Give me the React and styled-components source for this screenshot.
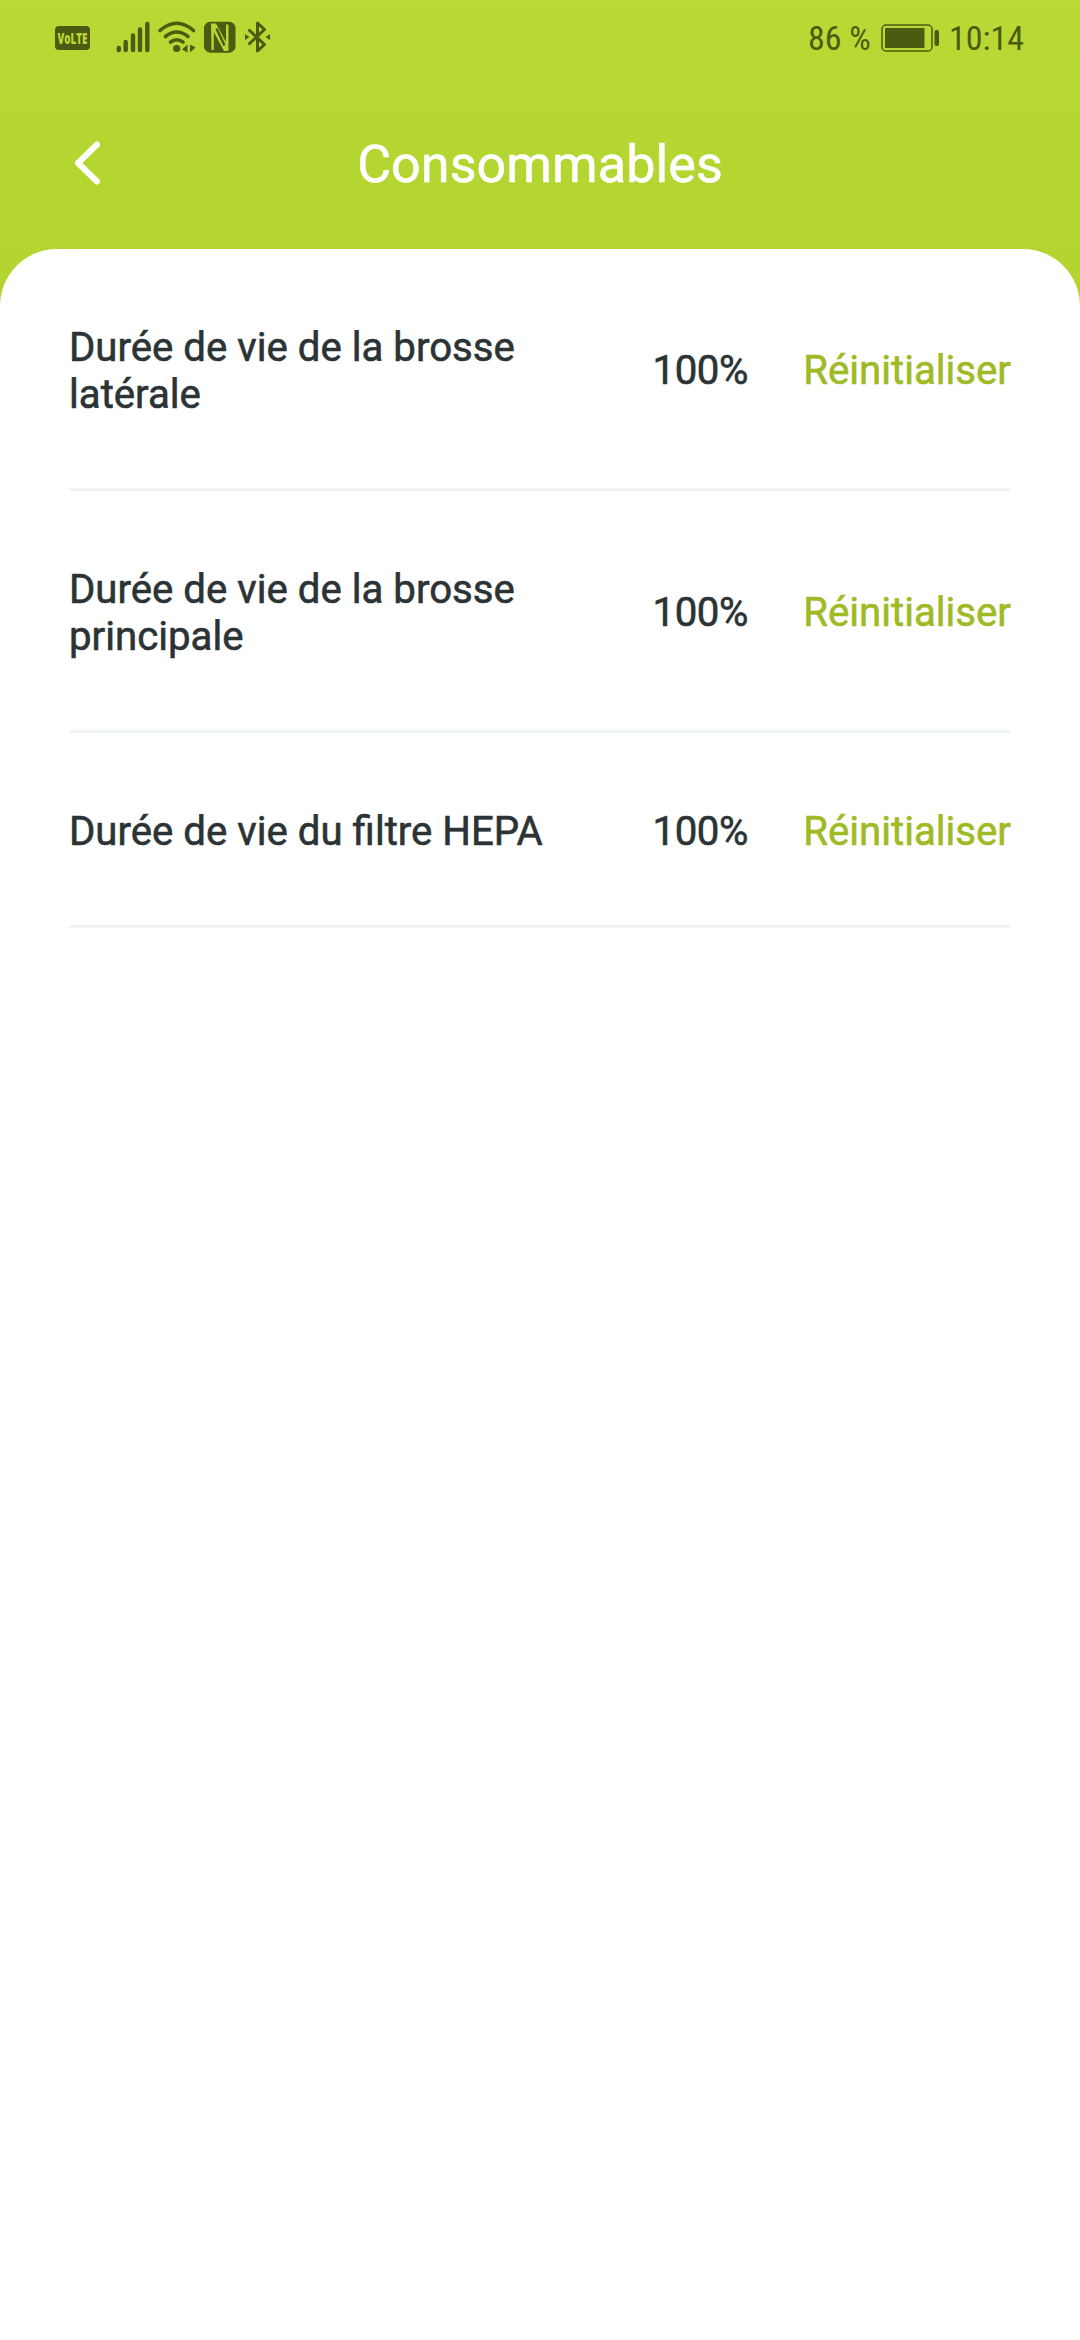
import React from "react";
import styled, { createGlobalStyle } from "styled-components";

const GlobalStyle = createGlobalStyle`
  body {
    margin: 0;
    background-color: #fff;
    font-family: Roboto, sans-serif;
  }
`;

const Screen = styled.div`
  display: flex;
  flex-direction: column;
  width: 1080px;
  height: 2340px;
  background: linear-gradient(#bad934 0px, #b5d531 160px, #b4d42f 320px);
`;

const StatusBar = styled.div`
  display: flex;
  align-items: center;
  justify-content: space-between;
  box-sizing: border-box;
  height: 76px;
  padding: 0 55px;
  color: #4b5b12;
`;

const StatusIcons = styled.svg`
  display: block;
  width: 220px;
  height: 76px;
`;

const StatusInfo = styled.div`
  display: flex;
  align-items: center;
`;

const StatusText = styled.span`
  width: ${(props) => props.$width}px;
  font-size: 34px;
  line-height: 40px;
  font-stretch: 75%;
  white-space: nowrap;
`;

const Battery = styled.svg`
  width: 59px;
  height: 28px;
  margin-right: 9px;
`;

const Header = styled.header`
  display: grid;
  grid-template-columns: 120px 1fr 120px;
  align-items: center;
  height: 173px;
`;

const BackButton = styled.button`
  display: flex;
  padding: 0 0 0 71px;
  border: 0;
  background: none;
`;

const Title = styled.h1`
  margin: 0;
  padding-top: 3px;
  color: #fff;
  font-size: 52px;
  font-weight: 400;
  line-height: 61px;
  letter-spacing: 0.1px;
  text-align: center;
  -webkit-text-stroke: 0.6px currentColor;
`;

const Sheet = styled.main`
  flex: 1;
  padding: 0 69px;
  border-radius: 57px 57px 0 0;
  background-color: #fff;
`;

const Item = styled.div`
  display: flex;
  align-items: center;
  padding: 75px 0 70px;
  border-bottom: 3px solid #f0f3f3;
  color: #2b3335;
  font-size: 40.2px;
  line-height: 47px;
  -webkit-text-stroke: 0.6px currentColor;
`;

const ItemName = styled.div`
  width: 520px;
`;

const ItemLevel = styled.div`
  margin: -1px 0 0 63.5px;
  letter-spacing: -0.4px;
`;

const ResetButton = styled.button`
  margin: -1px 0 0 auto;
  padding: 0;
  border: 0;
  background: none;
  color: #9fba25;
  font: inherit;
`;

const items = [
  { name: "Durée de vie de la brosse latérale", level: 100 },
  { name: "Durée de vie de la brosse principale", level: 100 },
  { name: "Durée de vie du filtre HEPA", level: 100 },
];

const App = () => {
  return (
    <Screen>
      <GlobalStyle />
      <StatusBar>
        <StatusIcons viewBox="55 0 220 76" fill="none" stroke="currentColor">
          <rect x="55" y="26" width="35" height="24" rx="4" fill="currentColor" stroke="none" />
          <text
            x="57.5"
            y="43.5"
            fill="#b8d733"
            stroke="none"
            fontFamily="Open Sans"
            fontSize="15"
            fontWeight="800"
            textLength="30"
            lengthAdjust="spacingAndGlyphs"
          >
            VoLTE
          </text>
          <path
            d="M118.8 48v2M125.7 42v8M133 35.500v14.500M140 29.500v20.500M147.300 24v26"
            strokeWidth="4.400"
            strokeLinecap="round"
          />
          <path
            d="M160 30.500Q176.700 16 193.500 30.500M165.500 36.500Q176.700 27.500 188 36.500M170.500 42Q176.700 37.500 183 42"
            strokeWidth="3.600"
            strokeLinecap="round"
          />
          <circle cx="176.700" cy="48.500" r="3.600" fill="currentColor" stroke="none" />
          <path d="M182 49.500l5.500-5v8zM190 44.500v8l5.500-5z" fill="currentColor" stroke="none" />
          <rect x="204" y="21.700" width="31.500" height="31" rx="6.500" fill="currentColor" stroke="none" />
          <path
            d="M211 23.500L216 23.500L226 42V24.500H228.500V51L224 51L213.800 32V50H211.500z"
            fill="#b8d733"
            stroke="none"
          />
          <path d="M216.500 28.500L224.500 45.500" strokeWidth="2.500" />
          <path
            d="M248.500 29.500L264.500 44.500L257.500 51V23L264.500 29.500L248.500 44.500"
            strokeWidth="3"
            strokeLinejoin="round"
          />
          <path d="M245 34l4.500 3-4.500 3zM270 34l-4.500 3 4.500 3z" fill="currentColor" stroke="none" />
        </StatusIcons>
        <StatusInfo>
          <StatusText $width={73}>86 %</StatusText>
          <Battery viewBox="0 0 59 28" fill="none" stroke="currentColor">
            <rect x="1" y="1" width="50" height="26" rx="4" strokeWidth="1.500" />
            <rect x="4" y="4" width="39.500" height="20" rx="1" fill="currentColor" stroke="none" />
            <rect x="53.500" y="6" width="4.500" height="16" rx="2" fill="currentColor" stroke="none" />
          </Battery>
          <StatusText $width={76}>10:14</StatusText>
        </StatusInfo>
      </StatusBar>
      <Header>
        <BackButton aria-label="Retour">
          <svg width="32" height="50" fill="none" stroke="#fff">
            <path d="M26 6.500L7 25L26 43.500" strokeWidth="6" strokeLinecap="round" strokeLinejoin="round" />
          </svg>
        </BackButton>
        <Title>Consommables</Title>
      </Header>
      <Sheet>
        {items.map((item) => (
          <Item key={item.name}>
            <ItemName>{item.name}</ItemName>
            <ItemLevel>{item.level}%</ItemLevel>
            <ResetButton>Réinitialiser</ResetButton>
          </Item>
        ))}
      </Sheet>
    </Screen>
  );
};

export default App;
